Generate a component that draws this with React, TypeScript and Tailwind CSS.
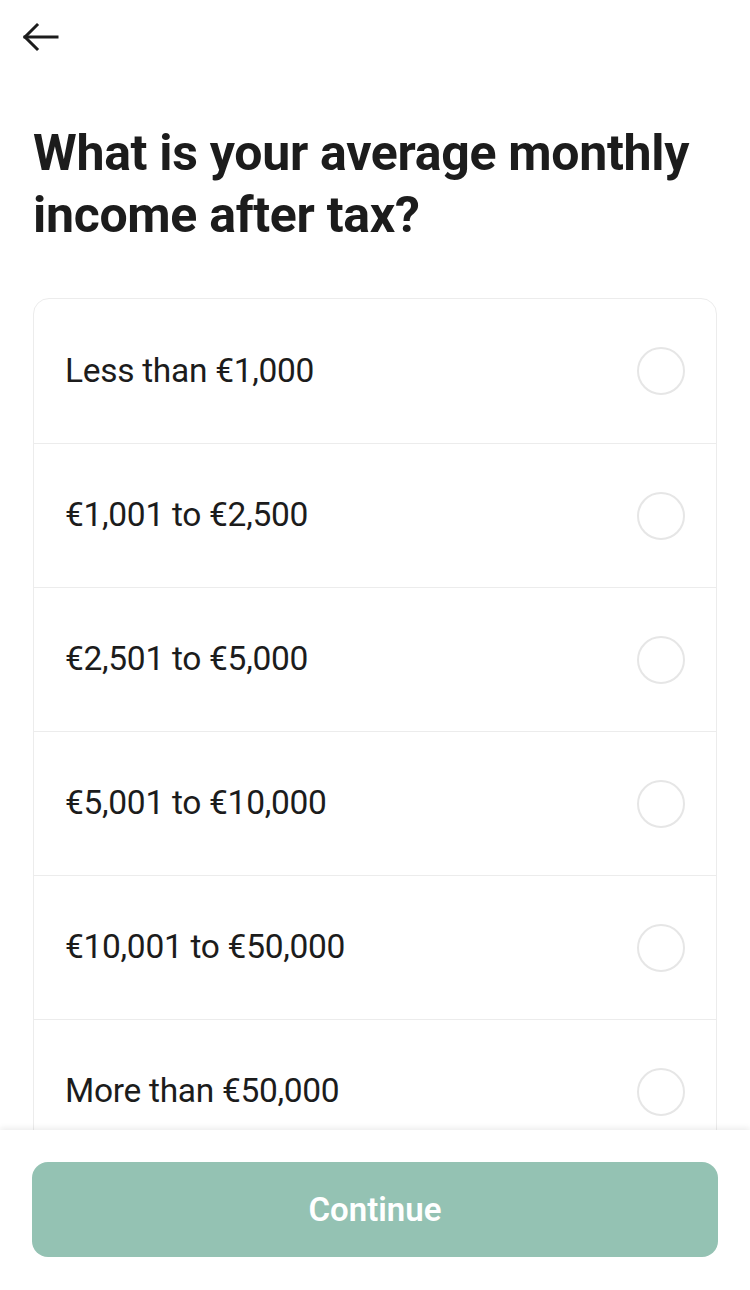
import React, { useState } from 'react';

const options = [
    'Less than €1,000',
    '€1,001 to €2,500',
    '€2,501 to €5,000',
    '€5,001 to €10,000',
    '€10,001 to €50,000',
    'More than €50,000',
];

export default function App() {
    const [selected, setSelected] = useState<number | null>(null);

    return (
        <div className="h-[1290px] w-[750px] flex flex-col bg-white text-[#1c1c1c] font-['Roboto',sans-serif] overflow-hidden">
            <div className="flex-1 overflow-hidden">
                {/* Header */}
                <div className="pl-[21px] pt-[22px]">
                    <svg width="40" height="30" viewBox="0 0 40 30" fill="none" stroke="#1c1c1c" strokeWidth="3" strokeLinecap="square">
                        <path d="M4 15 H36" />
                        <path d="M16 3 L4 15 L16 27" />
                    </svg>
                </div>

                <h1 className="px-[33px] mt-[70px] text-[50px] leading-[62px] font-bold tracking-[-0.3px]">
                    What is your average monthly income after tax?
                </h1>

                {/* Options */}
                <div className="mx-[33px] mt-[52px] rounded-[16px] border border-[#ececec] bg-white">
                    {options.map((opt, i) => (
                        <button
                            key={i}
                            onClick={() => setSelected(i)}
                            className={`w-full h-[144px] flex items-center justify-between pl-[31px] pr-[31px] text-left ${i > 0 ? 'border-t border-[#ececec]' : ''}`}
                        >
                            <span className="text-[33.5px] tracking-[-0.3px]">{opt}</span>
                            <span className={`w-[48px] h-[48px] rounded-full border-2 ${selected === i ? 'border-[#2f8f74] border-[14px]' : 'border-[#e6e6e6]'}`} />
                        </button>
                    ))}
                </div>
            </div>

            {/* Footer */}
            <div className="h-[160px] shrink-0 bg-white shadow-[0_-2px_6px_rgba(0,0,0,0.08)] px-[32px] pt-[32px]">
                <button className="w-full h-[95px] rounded-[16px] bg-[#94c2b3] text-white text-[33px] font-semibold">
                    Continue
                </button>
            </div>
        </div>
    );
}
